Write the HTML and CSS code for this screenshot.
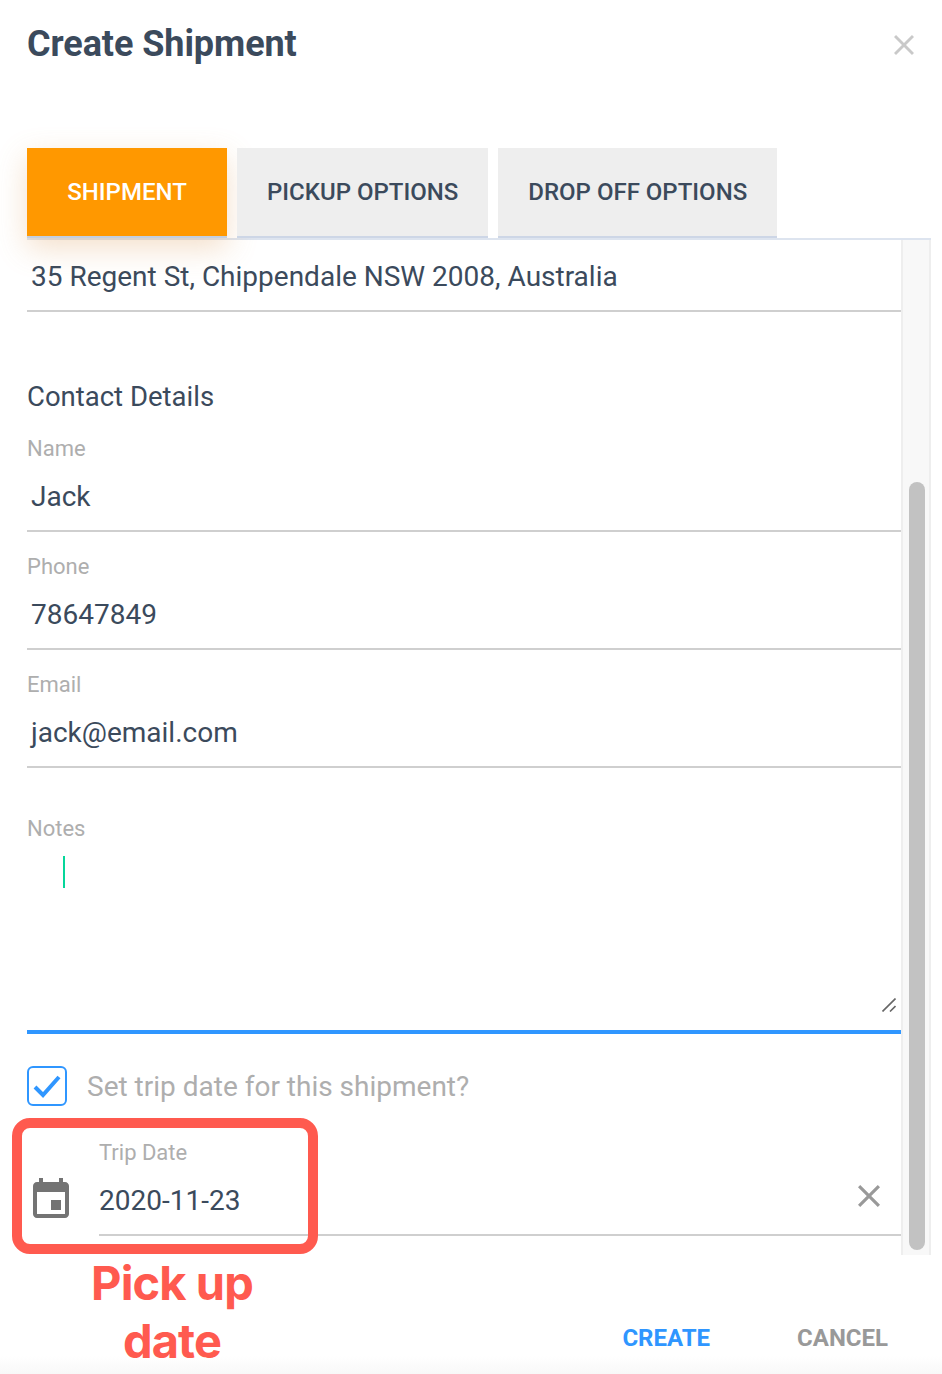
FILE: index.html
```html
<!DOCTYPE html>
<html lang="en">
<head>
<meta charset="utf-8">
<title>Create Shipment</title>
<link rel="stylesheet" href="styles.css">
</head>
<body>
<div class="dialog">
  <header class="head">
    <h1 class="title">Create Shipment</h1>
    <svg class="close" viewBox="5 5 14 14"><path d="M19 6.41L17.59 5 12 10.59 6.41 5 5 6.41 10.59 12 5 17.59 6.41 19 12 13.41 17.59 19 19 17.59 13.41 12z"/></svg>
  </header>
  <nav class="tabs">
    <div class="tab tab-active">SHIPMENT</div>
    <div class="tab">PICKUP OPTIONS</div>
    <div class="tab">DROP OFF OPTIONS</div>
  </nav>
  <section class="panel">
    <div class="scroll">
      <div class="address">35 Regent St, Chippendale NSW 2008, Australia</div>
      <h2 class="section">Contact Details</h2>
      <div class="field">
        <div class="label">Name</div>
        <div class="value">Jack</div>
      </div>
      <div class="field">
        <div class="label">Phone</div>
        <div class="value">78647849</div>
      </div>
      <div class="field">
        <div class="label">Email</div>
        <div class="value">jack@email.com</div>
      </div>
      <div class="notes">
        <div class="label">Notes</div>
        <div class="caret"></div>
        <svg class="grip" viewBox="0 0 14 14"><path d="M0.5 13.5L13.5 0.5M8 13.5L13.5 8"/></svg>
      </div>
      <div class="check-row">
        <div class="check"><svg viewBox="0 0 36 36"><path d="M6 19l8 8L30 9"/></svg></div>
        <span class="check-label">Set trip date for this shipment?</span>
      </div>
      <div class="date-row">
        <svg class="cal" viewBox="0 0 24 24"><path d="M17 12h-5v5h5v-5zM16 1v2H8V1H6v2H5c-1.11 0-1.99.9-1.99 2L3 19c0 1.1.89 2 2 2h14c1.1 0 2-.9 2-2V5c0-1.1-.9-2-2-2h-1V1h-2zm3 18H5V8h14v11z"/></svg>
        <div class="date-field">
          <div class="label">Trip Date</div>
          <div class="value">2020-11-23</div>
          <svg class="clear" viewBox="5 5 14 14"><path d="M19 6.41L17.59 5 12 10.59 6.41 5 5 6.41 10.59 12 5 17.59 6.41 19 12 13.41 17.59 19 19 17.59 13.41 12z"/></svg>
        </div>
      </div>
    </div>
    <div class="track"><div class="thumb"></div></div>
  </section>
  <footer class="foot">
    <span class="btn btn-create">CREATE</span>
    <span class="btn btn-cancel">CANCEL</span>
  </footer>
  <div class="mark"></div>
  <div class="mark-text">Pick up<br>date</div>
</div>
</body>
</html>
```
FILE: styles.css
```css
* { box-sizing: border-box; }
html, body { margin: 0; padding: 0; background: #fff; }
body { font-family: Roboto, "Liberation Sans", sans-serif; color: #3b4a5c; }
.dialog { position: relative; width: 942px; height: 1374px; overflow: hidden; display: flex; flex-direction: column; }
.head { height: 148px; padding: 22px 28px 0 27px; display: flex; justify-content: space-between; align-items: flex-start; }
.title { margin: 0; font-size: 36px; line-height: 44px; font-weight: 700; color: #3b4a5c; letter-spacing: -0.07px; }
.close { width: 20px; height: 20px; margin-top: 13px; fill: #c9c9c9; }
.tabs { display: flex; gap: 10px; padding-left: 27px; height: 90px; position: relative; z-index: 2; }
.tab { height: 90px; padding: 0 30px; background: #eeeeee; border-bottom: 2px solid #cdd6e6; font-size: 24px; font-weight: 500; line-height: 88px; color: #3b4a5c; }
.tab-active { width: 200px; padding: 0; text-align: center; background: #ff9800; color: #fff; border-bottom-color: #c4cfe0; height: 90px; box-shadow: 0 10px 30px rgba(220, 150, 80, 0.3); }
.panel { margin: 0 11px 0 27px; height: 1017px; display: flex; border-top: 2px solid #dde4ef; }
.scroll { flex: 1; min-width: 0; overflow: hidden; }
.track { width: 30px; background: #f8f8f8; border-left: 2px solid #eeeeee; border-right: 2px solid #eeeeee; padding: 242px 4px 0 6px; }
.thumb { height: 768px; background: #c2c2c2; border-radius: 8px; }
.address { height: 72px; padding: 19px 0 0 4px; font-size: 28px; line-height: 36px; border-bottom: 2px solid #cfcfcf; }
.section { margin: 0; padding-top: 68px; font-size: 27.5px; line-height: 34px; font-weight: 400; height: 102px; color: #3b4a5c; }
.label { font-size: 22px; line-height: 30px; color: #aeaeae; }
.value { font-size: 28px; line-height: 36px; padding-left: 4px; margin-top: 15px; color: #3b4a5c; }
.field { height: 118px; padding-top: 20px; border-bottom: 2px solid #cfcfcf; }
.notes { position: relative; padding-top: 46px; height: 266px; border-bottom: 4px solid #2f96ff; }
.caret { width: 2px; height: 32px; margin: 12px 0 0 36px; background: #05d69a; }
.grip { position: absolute; right: 5px; bottom: 18px; width: 14px; height: 14px; fill: none; stroke: #666; stroke-width: 1.6; }
.check-row { display: flex; align-items: center; gap: 20px; margin-top: 32px; height: 40px; }
.check { width: 40px; height: 40px; border: 2px solid #2f96ff; border-radius: 6px; flex: none; }
.check svg { display: block; width: 36px; height: 36px; fill: none; stroke: #2f96ff; stroke-width: 4; }
.check-label { font-size: 28px; line-height: 36px; padding-top: 2px; color: #aeaeae; }
.date-row { display: flex; margin-top: 31px; }
.cal { width: 48px; height: 48px; flex: none; margin: 39px 24px 0 0; fill: #737373; }
.date-field { position: relative; flex: 1; height: 99px; padding-top: 1px; border-bottom: 2px solid #cfcfcf; }
.date-field .value { padding-left: 0; margin-top: 15px; }
.clear { position: absolute; right: 21px; top: 48px; width: 22px; height: 22px; fill: #999; }
.foot { flex: 1; display: flex; justify-content: flex-end; gap: 87px; padding: 66px 54px 0 0; background: linear-gradient(#fff 85%, #f8f8f8); }
.btn { font-size: 24px; line-height: 34px; font-weight: 700; }
.btn-create { color: #2f96ff; }
.btn-cancel { color: #999; }
.mark { position: absolute; left: 12px; top: 1118px; width: 306px; height: 136px; border: 10px solid #ff5a4f; border-radius: 18px; }
.mark-text { position: absolute; left: 52px; top: 1254px; width: 240px; text-align: center; font-family: Inter, sans-serif; font-size: 47px; line-height: 58px; font-weight: 700; color: #ff5a4f; letter-spacing: -0.9px; }
```
